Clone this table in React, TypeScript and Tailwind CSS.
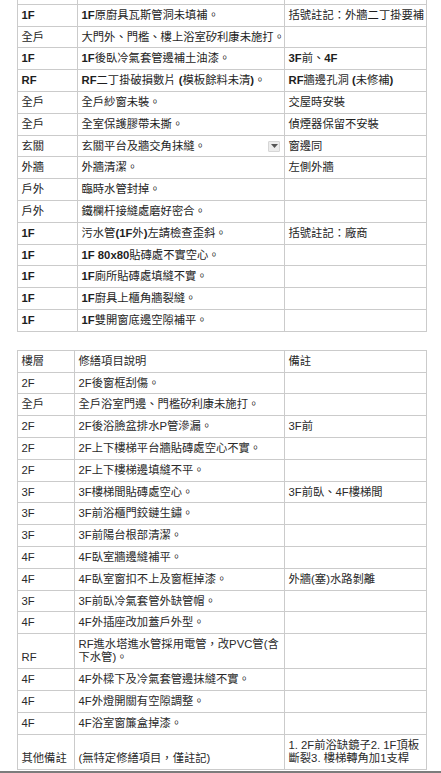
import type { ReactNode } from 'react';

type Row = [string, ReactNode, ReactNode];

const firstRows: Row[] = [
  ['1F', '1F原廚具瓦斯管洞未填補。', '括號註記：外牆二丁掛要補'],
  ['全戶', '大門外、門檻、樓上浴室矽利康未施打。', ''],
  ['1F', '1F後臥冷氣套管邊補土油漆。', '3F前、4F'],
  ['RF', 'RF二丁掛破損數片 (模板餘料未清)。', 'RF牆邊孔洞 (未修補)'],
  ['全戶', '全戶紗窗未裝。', '交屋時安裝'],
  ['全戶', '全室保護膠帶未撕。', '偵煙器保留不安裝'],
  ['玄關', 'DROPDOWN', '窗邊同'],
  ['外牆', '外牆清潔。', '左側外牆'],
  ['戶外', '臨時水管封掉。', ''],
  ['戶外', '鐵欄杆接縫處磨好密合。', ''],
  ['1F', '污水管(1F外)左請檢查歪斜。', '括號註記：廠商'],
  ['1F', '1F 80x80貼磚處不實空心。', ''],
  ['1F', '1F廁所貼磚處填縫不實。', ''],
  ['1F', '1F廚具上櫃角牆裂縫。', ''],
  ['1F', '1F雙開窗底邊空隙補平。', ''],
];

const secondRows: Row[] = [
  ['樓層', '修繕項目說明', '備註'],
  ['2F', '2F後窗框刮傷。', ''],
  ['全戶', '全戶浴室門邊、門檻矽利康未施打。', ''],
  ['2F', '2F後浴臉盆排水P管滲漏。', '3F前'],
  ['2F', '2F上下樓梯平台牆貼磚處空心不實。', ''],
  ['2F', '2F上下樓梯邊填縫不平。', ''],
  ['3F', '3F樓梯間貼磚處空心。', '3F前臥、4F樓梯間'],
  ['3F', '3F前浴櫃門鉸鏈生鏽。', ''],
  ['3F', '3F前陽台根部清潔。', ''],
  ['4F', '4F臥室牆邊縫補平。', ''],
  ['4F', '4F臥室窗扣不上及窗框掉漆。', '外牆(塞)水路剝離'],
  ['3F', '3F前臥冷氣套管外缺管帽。', ''],
  ['4F', '4F外插座改加蓋戶外型。', ''],
  [
    'RF',
    <>
      RF進水塔進水管採用電管，改PVC管(含
      <br />
      下水管)。
    </>,
    '',
  ],
  ['4F', '4F外樑下及冷氣套管邊抹縫不實。', ''],
  ['4F', '4F外燈開關有空隙調整。', ''],
  ['4F', '4F浴室窗簾盒掉漆。', ''],
  [
    '其他備註',
    '(無特定修繕項目，僅註記)',
    <>
      1. 2F前浴缺鏡子2. 1F頂板
      <br />
      斷裂3. 樓梯轉角加1支桿
    </>,
  ],
];

const cell =
  'border border-[#cbcbcb] px-[3.5px] pt-[4px] pb-[3.5px] align-bottom leading-[13.3px] whitespace-nowrap overflow-hidden';

// First table renders its latin runs heavier than the CJK text
function Heavy({ text }: { text: ReactNode }) {
  if (typeof text !== 'string') return <>{text}</>;
  return (
    <>
      {text.split(/([\x20-\x7e]+)/).map((part, i) =>
        /^[\x20-\x7e]+$/.test(part) && part.trim() ? (
          <b key={i} className="font-bold">
            {part}
          </b>
        ) : (
          part
        )
      )}
    </>
  );
}

function DropdownCell() {
  return (
    <div className="flex items-center justify-between">
      <span>玄關平台及牆交角抹縫。</span>
      <span className="mr-[0.5px] flex h-[11px] w-[12px] items-center justify-center rounded-[1px] border border-[#d6d6d6] bg-[#ececec]">
        <svg width="7" height="4" viewBox="0 0 7 4">
          <path d="M0 0 H7 L3.5 4 Z" fill="#555" />
        </svg>
      </span>
    </div>
  );
}

export default function App() {
  return (
    <div
      className="min-h-[773px] w-[441px] bg-white text-[11.3px] text-[#1e1e1e]"
      style={{ fontFamily: '"Liberation Sans", Arial, "Noto Sans CJK TC", sans-serif' }}
    >
      <div className="pl-[17px]">
        {/* First table, scrolled so that its previous row is only a sliver */}
        <table className="w-[409px] table-fixed border-collapse">
          <colgroup>
            <col className="w-[60px]" />
            <col className="w-[207px]" />
            <col className="w-[142px]" />
          </colgroup>
          <tbody>
            <tr className="h-[4.3px]">
              <td className="border border-t-0 border-[#cbcbcb] p-0" />
              <td className="border border-t-0 border-[#cbcbcb] p-0" />
              <td className="border border-t-0 border-[#cbcbcb] p-0" />
            </tr>
            {firstRows.map((row, i) => (
              <tr key={i}>
                <td className={cell}>
                  <Heavy text={row[0]} />
                </td>
                <td className={cell}>
                  {row[1] === 'DROPDOWN' ? <DropdownCell /> : <Heavy text={row[1]} />}
                </td>
                <td className={cell}>
                  <Heavy text={row[2]} />
                </td>
              </tr>
            ))}
          </tbody>
        </table>

        {/* Second table */}
        <table className="mt-[18px] w-[409px] table-fixed border-collapse text-[#2a2a2a]">
          <colgroup>
            <col className="w-[57px]" />
            <col className="w-[210px]" />
            <col className="w-[142px]" />
          </colgroup>
          <tbody>
            {secondRows.map((row, i) => (
              <tr key={i}>
                <td className={cell}>{row[0]}</td>
                <td className={cell}>{row[1]}</td>
                <td className={cell}>{row[2]}</td>
              </tr>
            ))}
          </tbody>
        </table>
      </div>
      <div className="mt-[1px] h-[2px] bg-[#7c7c7c]" />
    </div>
  );
}
